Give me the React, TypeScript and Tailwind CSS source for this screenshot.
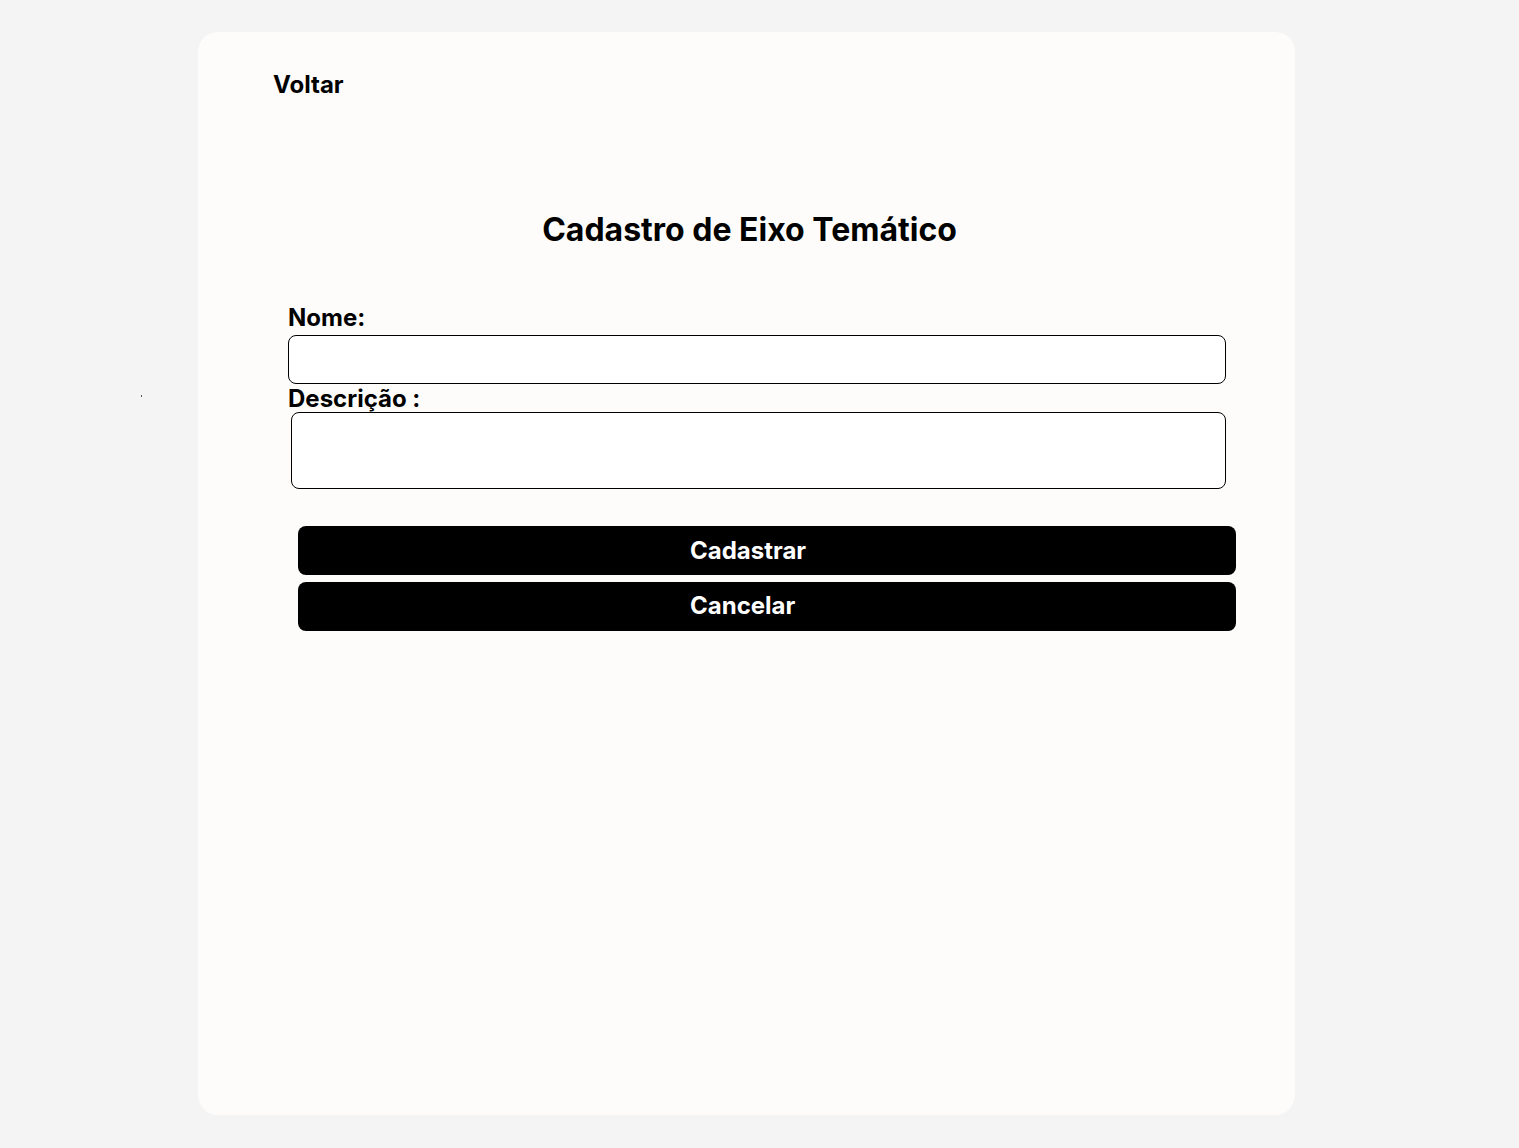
import React from "react";

export default function App() {
  return (
    <div
      className="relative min-h-[1148px] w-full bg-[#f4f4f4] pt-[32px] pb-[33px]"
      style={{ fontFamily: "Inter, 'Noto Sans', sans-serif" }}
    >
      <div className="absolute left-[141px] top-[395px] h-[2px] w-[1px] bg-[#555]" />
      <div className="ml-[198px] flex h-[1083px] w-[1097px] flex-col rounded-[20px] bg-[#fdfcfa] pt-[38px]">
        <div className="pl-[75px]">
          <span className="text-[24px] font-bold leading-[29px] text-black">Voltar</span>
        </div>
        <h1 className="mt-[111px] pl-[6px] text-center text-[32px] font-bold leading-[39px] text-black">
          Cadastro de Eixo Temático
        </h1>
        <form className="mt-[55px] flex flex-col pl-[90px]" onSubmit={(e) => e.preventDefault()}>
          <label className="text-[24px] font-bold leading-[28px] text-black">Nome:</label>
          <input
            type="text"
            className="mt-[3px] h-[49px] w-[938px] rounded-[8px] border border-black bg-white px-3 outline-none"
          />
          <label className="mt-[2px] text-[24px] font-bold leading-[26px] text-black">Descrição :</label>
          <textarea className="ml-[3px] h-[77px] w-[935px] resize-none rounded-[8px] border border-black bg-white px-3 outline-none" />
          <button
            type="submit"
            className="ml-[10px] mt-[37px] h-[49px] w-[938px] rounded-[8px] bg-black pl-[392px] text-left text-[24px] font-bold leading-[28px] text-white"
          >
            Cadastrar
          </button>
          <button
            type="button"
            className="ml-[10px] mt-[7px] h-[49px] w-[938px] rounded-[8px] bg-black pb-[1px] pl-[392px] text-left text-[24px] font-bold leading-[28px] text-white"
          >
            Cancelar
          </button>
        </form>
      </div>
    </div>
  );
}
